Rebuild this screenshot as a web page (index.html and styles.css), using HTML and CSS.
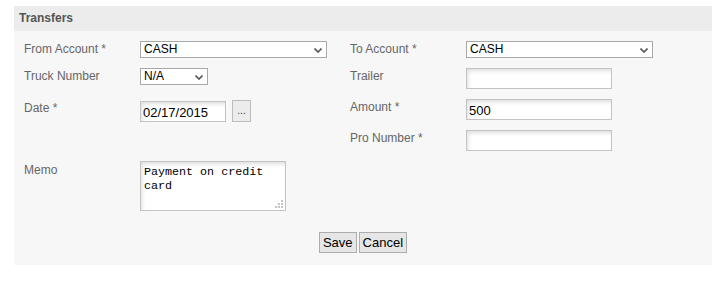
FILE: index.html
```html
<!DOCTYPE html>
<html lang="en">
<head>
    <meta charset="UTF-8">
    <title>Transfers</title>
    <link rel="stylesheet" href="styles.css">
</head>
<body>
    <div class="panel">
        <div class="panel-header">Transfers</div>
        <div class="panel-body">
            <div class="form-grid">
                <label class="lbl">From Account *</label>
                <div class="field">
                    <span class="select-wrap wide">
                        <select><option>CASH</option></select>
                        <svg class="chev" width="8" height="5" viewBox="0 0 8 5"><path d="M0.5 0.5 L4 4 L7.5 0.5" fill="none" stroke="#555" stroke-width="1.6"/></svg>
                    </span>
                </div>
                <label class="lbl">To Account *</label>
                <div class="field">
                    <span class="select-wrap wide">
                        <select><option>CASH</option></select>
                        <svg class="chev" width="8" height="5" viewBox="0 0 8 5"><path d="M0.5 0.5 L4 4 L7.5 0.5" fill="none" stroke="#555" stroke-width="1.6"/></svg>
                    </span>
                </div>

                <label class="lbl">Truck Number</label>
                <div class="field">
                    <span class="select-wrap small">
                        <select><option>N/A</option></select>
                        <svg class="chev" width="8" height="5" viewBox="0 0 8 5"><path d="M0.5 0.5 L4 4 L7.5 0.5" fill="none" stroke="#555" stroke-width="1.6"/></svg>
                    </span>
                </div>
                <label class="lbl">Trailer</label>
                <div class="field"><input type="text" class="txt"></div>

                <label class="lbl lbl-date">Date *</label>
                <div class="field date-field">
                    <input type="text" class="txt date" value="02/17/2015">
                    <button class="pick">...</button>
                </div>
                <label class="lbl">Amount *</label>
                <div class="field"><input type="text" class="txt" value="500"></div>

                <div></div>
                <div></div>
                <label class="lbl">Pro Number *</label>
                <div class="field"><input type="text" class="txt"></div>

                <label class="lbl lbl-memo">Memo</label>
                <div class="field">
                    <span class="memo-wrap">
                        <textarea class="memo">Payment on credit
card</textarea>
                        <svg class="grip" width="9" height="9" viewBox="0 0 9 9">
                            <rect x="6" y="0" width="2" height="2" fill="#c4c4c4"/>
                            <rect x="3" y="3" width="2" height="2" fill="#c4c4c4"/>
                            <rect x="6" y="3" width="2" height="2" fill="#c4c4c4"/>
                            <rect x="0" y="6" width="2" height="2" fill="#c4c4c4"/>
                            <rect x="3" y="6" width="2" height="2" fill="#c4c4c4"/>
                            <rect x="6" y="6" width="2" height="2" fill="#c4c4c4"/>
                        </svg>
                    </span>
                </div>
            </div>

            <div class="actions">
                <button class="btn">Save</button>
                <button class="btn">Cancel</button>
            </div>
        </div>
    </div>
</body>
</html>
```

FILE: styles.css
```css
body {
    margin: 0;
    padding: 6px 0 0 14px;
    font-family: "Liberation Sans", Arial, sans-serif;
    font-size: 12px;
    background: #fff;
}
.panel {
    background: #f7f7f7;
}
.panel-header {
    background: #ececec;
    height: 25px;
    line-height: 25px;
    padding-left: 5px;
    font-weight: bold;
    color: #555;
}
.panel-body {
    padding: 10px 0 12px 10px;
}
.form-grid {
    display: grid;
    grid-template-columns: 116px 210px 116px 1fr;
    grid-template-rows: 27px 31px 31px 31px auto;
}
.lbl {
    color: #666;
    line-height: 14px;
    padding-top: 1px;
}
.lbl-date {
    padding-top: 2px;
}
.lbl-memo {
    padding-top: 2px;
}
.field {
    display: flex;
    align-items: flex-start;
}
.select-wrap {
    position: relative;
    display: inline-block;
}
.select-wrap select {
    appearance: none;
    -webkit-appearance: none;
    display: block;
    height: 17px;
    margin: 0;
    padding: 0 0 0 3px;
    border: 1px solid #a9a9a9;
    border-radius: 0;
    background: #fff;
    font-family: "Liberation Sans", Arial, sans-serif;
    font-size: 12px;
    line-height: 15px;
    color: #000;
}
.select-wrap.wide select {
    width: 187px;
}
.select-wrap.small select {
    width: 68px;
}
.chev {
    position: absolute;
    right: 5px;
    top: 7px;
}
.txt {
    display: block;
    box-sizing: border-box;
    width: 146px;
    height: 21px;
    margin: 0;
    padding: 1px 2px 0;
    border: 1px solid #c3c3c3;
    border-radius: 0;
    background: #fff;
    box-shadow: inset 2px 3px 4px -1px #ddd;
    font-family: "Liberation Sans", Arial, sans-serif;
    font-size: 13px;
    color: #000;
    outline: none;
}
.txt.date {
    width: 86px;
    margin-top: 2px;
}
.pick {
    box-sizing: border-box;
    width: 19px;
    height: 22px;
    margin: 1px 0 0 6px;
    padding: 0;
    border: 1px solid #bdbdbd;
    background: #ececec;
    font-size: 10px;
    line-height: 18px;
    color: #333;
}
.memo-wrap {
    position: relative;
    display: inline-block;
}
.memo {
    display: block;
    box-sizing: border-box;
    width: 146px;
    height: 50px;
    margin: 0;
    padding: 3px 3px;
    border: 1px solid #c3c3c3;
    border-radius: 0;
    background: #fff;
    box-shadow: inset 2px 3px 4px -1px #ddd;
    font-family: "Liberation Mono", "Courier New", monospace;
    font-size: 11.7px;
    line-height: 14px;
    color: #000;
    resize: none;
    outline: none;
}
.grip {
    position: absolute;
    right: 2px;
    bottom: 2px;
}
.actions {
    display: flex;
    justify-content: center;
    gap: 2px;
    margin-top: 21px;
    padding-right: 10px;
}
.btn {
    box-sizing: border-box;
    height: 21px;
    padding: 0 3px;
    border: 1px solid #adadad;
    border-radius: 0;
    background: #e6e6e6;
    font-family: "Liberation Sans", Arial, sans-serif;
    font-size: 13px;
    color: #000;
}
```
